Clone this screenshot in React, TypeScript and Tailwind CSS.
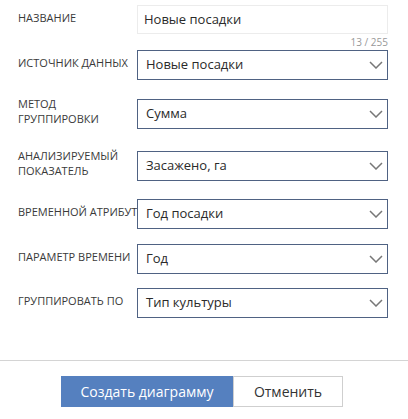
const ROWS: { label: string[]; value: string; mt: string }[] = [
  { label: ["ИСТОЧНИК ДАННЫХ"], value: "Новые посадки", mt: "mt-0" },
  { label: ["МЕТОД", "ГРУППИРОВКИ"], value: "Сумма", mt: "mt-[19px]" },
  { label: ["АНАЛИЗИРУЕМЫЙ", "ПОКАЗАТЕЛЬ"], value: "Засажено, га", mt: "mt-[22px]" },
  { label: ["ВРЕМЕННОЙ АТРИБУТ"], value: "Год посадки", mt: "mt-[18px]" },
  { label: ["ПАРАМЕТР ВРЕМЕНИ"], value: "Год", mt: "mt-[15px]" },
  { label: ["ГРУППИРОВАТЬ ПО"], value: "Тип культуры", mt: "mt-[14px]" },
];

function Chevron() {
  return (
    <svg width="14" height="8" viewBox="0 0 14 8" fill="none" className="shrink-0">
      <path d="M1 1l6 6 6-6" stroke="#777" strokeWidth="1.5" />
    </svg>
  );
}

export default function App() {
  return (
    <div
      className="h-[419px] w-[408px] bg-white text-[#333]"
      style={{ fontFamily: '"Open Sans", "Noto Sans", sans-serif' }}
    >
      <div className="px-[18px] pt-[5px]">
        <div className="flex">
          <div className="w-[119px] pt-[5px] text-[11px] leading-[15px] text-[#3a3a3a]">НАЗВАНИЕ</div>
          <div className="w-[251px]">
            <div className="flex h-[29px] items-center border border-[#ececec] px-[6px] text-[13px] text-[#2a2a2a]">
              Новые посадки
            </div>
            <div className="h-[16px] text-right text-[10px] leading-[17px] text-[#999]">13 / 255</div>
          </div>
        </div>

        {ROWS.map((r) => (
          <div key={r.value} className={"flex " + r.mt}>
            <div
              className={
                "w-[119px] whitespace-nowrap text-[11px] leading-[15px] text-[#3a3a3a] " +
                (r.label.length > 1 ? "-mt-[3px]" : "pt-[5px]")
              }
            >
              {r.label.map((l) => (
                <div key={l}>{l}</div>
              ))}
            </div>
            <div className="flex h-[30px] w-[251px] items-center justify-between border border-[#4f6283] pl-[8px] pr-[4px] text-[13px] text-[#2a2a2a]">
              <span>{r.value}</span>
              <Chevron />
            </div>
          </div>
        ))}
      </div>

      <div className="mt-[42px] border-t border-[#d4d4d4]" />

      <div className="mt-[15px] flex justify-center pr-[4px]">
        <button className="h-[31px] w-[172px] bg-[#5580bf] text-[14px] text-white">Создать диаграмму</button>
        <button className="h-[31px] w-[110px] border border-[#cfcfcf] bg-white text-[14px] text-[#333]">Отменить</button>
      </div>
    </div>
  );
}
